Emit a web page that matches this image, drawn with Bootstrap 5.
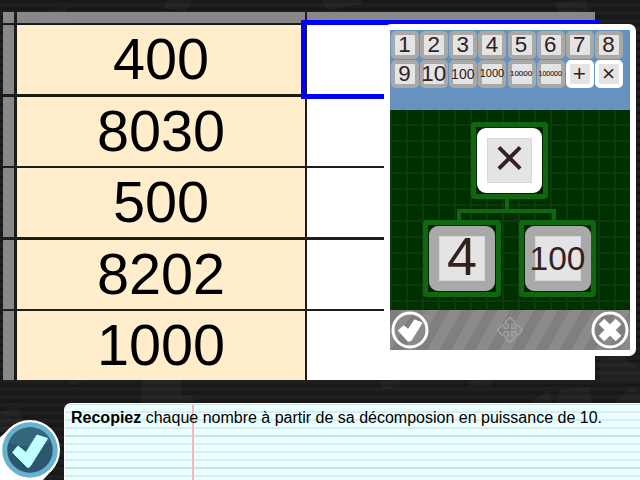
<!DOCTYPE html>
<html lang="fr">
<head>
<meta charset="utf-8">
<meta name="viewport" content="width=device-width, initial-scale=1">
<title>Décomposition des nombres</title>
<link href="https://cdn.jsdelivr.net/npm/bootstrap@5.3.0/dist/css/bootstrap.min.css" rel="stylesheet">
<style>
body{width:640px;height:480px;background:#1b1b1b repeating-linear-gradient(#181818 0 3px,#202020 3px 6px,#1c1c1c 6px 8px);font-family:"Liberation Sans",Arial,sans-serif;color:#000}
.scraps{left:0;top:0}
.sheet{display:grid;width:592px;height:368px;margin:12px 0 0 3px;grid-template-columns:11px 3px 288px 2px 288px;grid-template-rows:11px 2px 69px 3px 69px 2px 69px 3px 69px 2px 69px}
.head-cell{background:#888}
.num-cell{background:#ffedcc;font-size:57.6px;line-height:69px;height:69px;text-align:center;grid-column:3}
.blank-cell{background:#fff;grid-column:5}
.side-cell{background:#888;grid-column:1}
.line-1{grid-row:3}.line-2{grid-row:5}.line-3{grid-row:7}.line-4{grid-row:9}.line-5{grid-row:11}
.focus-cell{left:301px;top:20px;width:298px;height:79px;border:5px solid #00f;border-right:0}
.editor{left:384px;top:24px;width:252px;height:332px;padding:6px;background:#fff;border-radius:7px}
.tray{height:80px;padding:1px;background:#6592c0;display:grid;grid-template-columns:repeat(8,28px);grid-template-rows:28px 28px;column-gap:1.15px;row-gap:1px}
.tile{background:#e4e4e4;border:4px solid #a9a9a9;border-radius:5px;color:#33201f;font-size:22.4px;display:flex;align-items:center;justify-content:center;white-space:nowrap;line-height:1}
.tray .tile{padding-right:1px}
.tile>span{flex:none}
.tile.op{border-color:#fff}
.t3{font-size:14px}.t4{font-size:11px}.t5{font-size:8px}.t6{font-size:7px}
.t4,.t5,.t6{color:#1c1010;padding-bottom:1px}
.t5,.t6{-webkit-text-stroke:.1px #1c1010}
.tree{height:200px;padding-top:12px;background:linear-gradient(90deg,#0b3b0b 2px,transparent 2px) 0 0/16px 16px,linear-gradient(#0b3b0b 2px,transparent 2px) 0 14px/16px 16px,#003000}
.node{width:78px;height:77px;border:5px solid #116611;border-radius:4px;background:#002600;padding:1px}
.node .tile{width:66px;height:65px;border-width:10px;border-radius:9px;box-shadow:inset 0 0 0 1px #d8d8d8}
.node-top{width:77px;margin-left:81px}
.node-top .tile{width:65px}
.tile.n-op{font-size:54px;padding-bottom:7px}
.tile.n-one{font-size:54px;padding-bottom:5px}
.tile.n-hun{font-size:33.5px;padding:0 1px 0 0}
.stem{width:4px;height:10px;background:#116611;margin-left:115px}
.fork{width:99px;height:11px;margin-left:67px;border:4px solid #116611;border-bottom:0}
.pair{width:173px;margin-left:33px}
.pair .node:last-child{width:77px}
.toolbar{height:40px;background:repeating-linear-gradient(120deg,#7f7f7f 0 10.4px,#8b8b8b 10.4px 20.8px)}
.note{left:64px;top:403px;width:576px;height:77px;border-radius:7px 0 0 0;background:linear-gradient(#f3b8b8,#f3b8b8) 127px 1px/2px 100% no-repeat,linear-gradient(#cde0e2 2px,transparent 2px) 0 -1px/100% 32px,linear-gradient(#d5edf2 2px,transparent 2px) 0 -1px/100% 8px,#ecffff;border-top:1px solid #fff;border-left:1px solid #fff;font-size:16px;line-height:18px;padding:5px 0 0 6px}
</style>
<script src="https://cdn.jsdelivr.net/npm/bootstrap@5.3.0/dist/js/bootstrap.bundle.min.js"></script>
</head>
<body class="position-relative overflow-hidden m-0">
<svg class="scraps position-absolute" width="640" height="480" fill="#fff" fill-opacity=".03"><path d="M48 10l18-3 5 17H40zM168 0h25l-8 12-22-4zM322 0l5 11 35-8V0zM0 412l17-6 9 22-26 4zM142 380h40v23h-40zM68 381l15-1-11 6zM470 381l21-1v6l-21 1zM530 403l19-13 4 13zM560 390l29-3 3 16h-36zM617 400l15-14 8 8v9h-23zM380 382l19-2 4 5-20 5zM600 359l20-3 20 12v12h-40zM172 401l19-7 4 9zM555 2l30-2 5 10-30 6z"/></svg>

<main class="sheet position-relative">
  <div class="head-cell"></div><div></div><div class="head-cell"></div><div></div><div class="head-cell"></div>
  <div class="side-cell line-1"></div><div class="num-cell line-1">400</div><div class="blank-cell line-1"></div>
  <div class="side-cell line-2"></div><div class="num-cell line-2">8030</div><div class="blank-cell line-2"></div>
  <div class="side-cell line-3"></div><div class="num-cell line-3">500</div><div class="blank-cell line-3"></div>
  <div class="side-cell line-4"></div><div class="num-cell line-4">8202</div><div class="blank-cell line-4"></div>
  <div class="side-cell line-5"></div><div class="num-cell line-5">1000</div><div class="blank-cell line-5"></div>
</main>
<div class="focus-cell position-absolute"></div>

<section class="editor position-absolute">
  <div class="tray">
    <div class="tile"><span>1</span></div><div class="tile"><span>2</span></div><div class="tile"><span>3</span></div><div class="tile"><span>4</span></div><div class="tile"><span>5</span></div><div class="tile"><span>6</span></div><div class="tile"><span>7</span></div><div class="tile"><span>8</span></div>
    <div class="tile"><span>9</span></div><div class="tile"><span>10</span></div><div class="tile t3"><span>100</span></div><div class="tile t4"><span>1000</span></div><div class="tile t5"><span>10000</span></div><div class="tile t6"><span>100000</span></div><div class="tile op"><span>+</span></div><div class="tile op"><span>×</span></div>
  </div>
  <div class="tree">
    <div class="node node-top"><div class="tile op n-op"><span>×</span></div></div>
    <div class="stem"></div>
    <div class="fork"></div>
    <div class="pair d-flex justify-content-between">
      <div class="node"><div class="tile n-one"><span>4</span></div></div>
      <div class="node"><div class="tile n-hun"><span>100</span></div></div>
    </div>
  </div>
  <div class="toolbar d-flex align-items-center justify-content-between">
    <svg width="40" height="40" viewBox="0 0 40 40"><circle cx="20" cy="20" r="17" fill="none" stroke="#fff" stroke-width="3"/><path d="M8.800 20.500L13.500 16.200 18.300 19.800 24.500 10.300 31.500 13 21 30 18.300 31z" fill="#fff" stroke="#fff" stroke-width="1.500" stroke-linejoin="round"/></svg>
    <svg width="28" height="28" viewBox="-14 -14 28 28" fill="none" stroke="#a5a5a5" stroke-width="1.200" stroke-linejoin="round"><path d="M0-12.500L4.800-8V-6H1.800V-1.800H6V-4.800H8L12.500 0 8 4.800H6V1.800H1.800V6H4.800V8L0 12.500-4.800 8V6H-1.800V1.800H-6V4.800H-8L-12.500 0-8-4.800H-6V-1.800H-1.800V-6H-4.800V-8z"/></svg>
    <svg width="40" height="40" viewBox="0 0 40 40"><circle cx="20" cy="20" r="17" fill="none" stroke="#fff" stroke-width="3"/><path d="M11.500 11.500l17 17M28.500 11.500l-17 17" stroke="#fff" stroke-width="8"/></svg>
  </div>
</section>

<svg class="position-absolute start-0 bottom-0" width="64" height="64" viewBox="0 416 64 64"><path d="M0 437.500L10 428 53 469 43 480H0z" fill="#fff"/><circle cx="30" cy="450" r="30" fill="#fff"/><circle cx="30" cy="450" r="25.200" fill="#2a576d" stroke="#66b2cf" stroke-width="5"/><path d="M9 441a23 23 0 0 1 42 0q-15 10-42 2z" fill="#34677c"/><path d="M12.500 452.500L18 446 26 452.500 37 435 47.500 438.500 30 466.500Q28.500 468 27 467z" fill="#bfffff" stroke="#bfffff" stroke-linejoin="round"/></svg>
<p class="note position-absolute m-0 text-nowrap"><b>Recopiez</b> chaque nombre à partir de sa décomposion en puissance de 10.</p>
</body>
</html>
